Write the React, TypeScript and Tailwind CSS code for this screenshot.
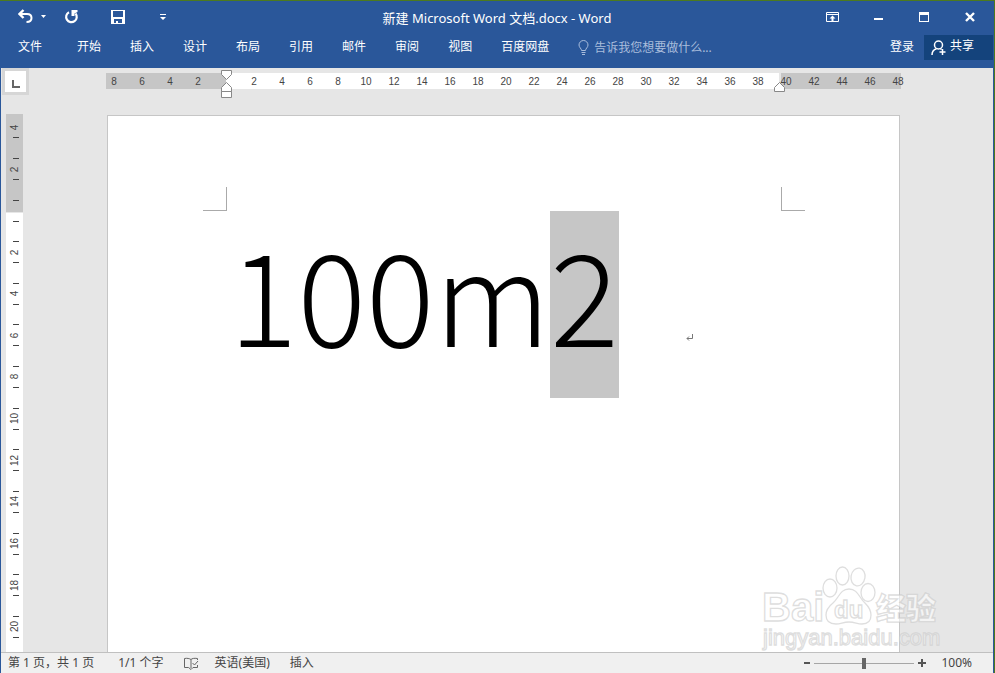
import { useState, type ReactNode } from "react";

const MENU_TABS = ["文件", "开始", "插入", "设计", "布局", "引用", "邮件", "审阅", "视图"];

const LEFT_MARGIN_MARKS = [8, 6, 4, 2];
const TEXT_MARKS = Array.from({ length: 19 }, (_, i) => (i + 1) * 2);
const RIGHT_MARGIN_MARKS = [40, 42, 44, 46, 48];
const VERTICAL_MARKS = Array.from({ length: 10 }, (_, i) => (i + 1) * 2);

function IconButton({
  label,
  className,
  children,
}: {
  label: string;
  className: string;
  children: ReactNode;
}) {
  return (
    <button
      type="button"
      aria-label={label}
      className={`flex h-5 items-center justify-center ${className}`}
    >
      {children}
    </button>
  );
}

function UndoIcon() {
  return (
    <svg width="15" height="15" viewBox="0 0 15 15" fill="none" className="-mt-1">
      <path d="M5.500 1 1.500 5 5.500 9" stroke="#fff" strokeWidth="2.400" />
      <path
        d="M2 5H9C11.800 5 13.500 6.500 13.500 9C13.500 11.500 11.500 13 8.500 13"
        stroke="#fff"
        strokeWidth="2"
      />
    </svg>
  );
}

function RedoIcon() {
  return (
    <svg width="15" height="15" viewBox="0 0 15 15" fill="none" className="-mt-1">
      <path
        d="M5 3.200A5.300 5.300 0 1 0 11.500 4.500"
        stroke="#fff"
        strokeWidth="2.200"
      />
      <path d="M7.500 1H13.500V3L10.500 4.500V7H7.500Z" fill="#fff" />
    </svg>
  );
}

function SaveIcon() {
  return (
    <svg width="14" height="14" viewBox="0 0 14 14" className="-mt-1">
      <path
        fillRule="evenodd"
        fill="#fff"
        d="M0 0H14V14H0ZM2 1V7H12V1ZM3 9V13H5V11H7V13H11V9Z"
      />
    </svg>
  );
}

function TitleBar() {
  return (
    <header className="grid h-[31px] grid-cols-[1fr_auto_1fr] items-center pt-1">
      <div className="flex items-center pl-[14px]">
        <IconButton label="撤消" className="w-5">
          <UndoIcon />
        </IconButton>
        <IconButton label="撤消选项" className="w-4">
          <svg width="5" height="3" viewBox="0 0 5 3" className="-mt-1">
            <path d="M0 0H5L2.500 3Z" fill="#fff" />
          </svg>
        </IconButton>
        <IconButton label="重复" className="ml-2 w-6">
          <RedoIcon />
        </IconButton>
        <IconButton label="保存" className="ml-[25px] w-5">
          <SaveIcon />
        </IconButton>
        <IconButton label="自定义快速访问工具栏" className="ml-[25px] w-5">
          <svg width="6" height="6" viewBox="0 0 6 6" className="-mt-1">
            <path d="M0 0H6V1H0ZM0 3H6L3 6Z" fill="#fff" />
          </svg>
        </IconButton>
      </div>
      <h1 className="pb-0.5 text-[13px] leading-5 whitespace-nowrap">
        新建 Microsoft Word 文档.docx - Word
      </h1>
      <div className="flex items-center justify-end gap-[26px] pr-[13px]">
        <IconButton label="功能区显示选项" className="w-5">
          <svg width="13" height="10" viewBox="0 0 13 10" className="-mt-1">
            <path d="M.5.5H12.500V9.500H.5ZM.5 2.500H12.500" fill="none" stroke="#fff" />
            <path d="M6.500 3.500 9.500 6.500H7.500V9H5.500V6.500H3.500Z" fill="#fff" />
          </svg>
        </IconButton>
        <IconButton label="最小化" className="w-5">
          <svg width="9" height="10" viewBox="0 0 9 10" className="-mt-1">
            <path d="M0 6H9V8H0Z" fill="#fff" />
          </svg>
        </IconButton>
        <IconButton label="最大化" className="w-5">
          <svg width="10" height="10" viewBox="0 0 10 10" className="-mt-1">
            <path fillRule="evenodd" d="M0 0H10V10H0ZM1 3V9H9V3Z" fill="#fff" />
          </svg>
        </IconButton>
        <IconButton label="关闭" className="w-5">
          <svg width="10" height="10" viewBox="0 0 10 10" className="-mt-1">
            <path d="M1 1 9 9M9 1 1 9" stroke="#fff" strokeWidth="2.400" />
          </svg>
        </IconButton>
      </div>
    </header>
  );
}

function MenuBar() {
  return (
    <nav className="flex h-9 items-start text-xs leading-6">
      <div className="flex gap-[29px] pt-[3px] pl-[17px]">
        {MENU_TABS.map((tab) => (
          <button key={tab} type="button" className="first:mr-[6px]">
            {tab}
          </button>
        ))}
        <button type="button">百度网盘</button>
      </div>
      <label className="flex min-w-0 flex-1 items-center gap-1 pt-1 pl-7 text-[#a9bddc]">
        <svg
          width="13"
          height="16"
          viewBox="0 0 13 16"
          fill="none"
          stroke="#a9bddc"
          className="shrink-0"
        >
          <path d="M4.500 10.500C4.500 8.500 2 7.500 2 5A4.500 4.500 0 0 1 11 5C11 7.500 8.500 8.500 8.500 10.500ZM4.500 12.500H8.500M5 14.500H8" />
        </svg>
        <input
          aria-label="告诉我您想要做什么"
          placeholder="告诉我您想要做什么..."
          className="h-6 w-full min-w-0 bg-transparent outline-none placeholder:text-[#a9bddc]"
        />
      </label>
      <button type="button" className="mr-[10px] pt-[3px]">
        登录
      </button>
      <button
        type="button"
        className="mt-[3px] flex h-[25px] w-[69px] items-center gap-1 bg-[#14437c] pl-[7px]"
      >
        <svg
          width="15"
          height="16"
          viewBox="0 0 15 16"
          fill="none"
          stroke="#fff"
          strokeWidth="1.500"
        >
          <circle cx="7.500" cy="5" r="4" />
          <path d="M1 15C1 11.500 3 9.500 5.500 8.800M9.500 8.800 10.500 9.500M11.500 9V15M8.500 12H14.500" />
        </svg>
        <span className="-mt-1">共享</span>
      </button>
    </nav>
  );
}

function HorizontalRuler() {
  return (
    <div className="flex h-9 items-start">
      <button
        type="button"
        aria-label="左对齐式制表符"
        className="mt-[3px] ml-1 flex h-[21px] w-[21px] shrink-0 items-center justify-center bg-white outline-3 outline-[#d6d6d6]"
      >
        <svg width="8" height="8" viewBox="0 0 8 8" className="mt-1">
          <path d="M1 0V7H8" fill="none" stroke="#666" strokeWidth="2" />
        </svg>
      </button>
      <div className="mt-[5px] ml-20 flex h-4 font-['Liberation_Sans',sans-serif] text-[10px] leading-[18px] text-[#444]">
        <div className="flex w-[120px] bg-[#c6c6c6]">
          {LEFT_MARGIN_MARKS.map((mark) => (
            <span key={mark} className="w-7 shrink-0 text-center first:-ml-[6px]">
              {mark}
            </span>
          ))}
        </div>
        <div className="relative flex w-[553px] bg-white pl-[14px]">
          <svg
            width="12"
            height="28"
            viewBox="0 0 12 28"
            className="absolute -top-[3px] -left-[5px]"
          >
            <path
              d="M.5.5H10.500V4.500L5.500 9.500.5 4.500ZM5.500 12.500 10.500 17.500V21.500H.5V17.500ZM.5 21.500H10.500V27.500H.5Z"
              fill="#fff"
              stroke="#888"
            />
          </svg>
          {TEXT_MARKS.map((mark) => (
            <span key={mark} className="w-7 shrink-0 text-center">
              {mark}
            </span>
          ))}
          <svg
            width="12"
            height="11"
            viewBox="0 0 12 11"
            className="absolute top-[9px] -right-[7px] z-10"
          >
            <path d="M5.500.5 10.500 5.500V9.500H.5V5.500Z" fill="#fff" stroke="#888" />
          </svg>
        </div>
        <div className="ml-0.5 flex w-[120px] bg-[#c6c6c6]">
          {RIGHT_MARGIN_MARKS.map((mark) => (
            <span key={mark} className="w-7 shrink-0 text-center first:-ml-[9px]">
              {mark}
            </span>
          ))}
        </div>
      </div>
    </div>
  );
}

function Tick() {
  return <i className="block h-px w-1.5 shrink-0 bg-[#444]" />;
}

function RulerNumber({ value, open = false }: { value: number; open?: boolean }) {
  return (
    <div className="flex flex-col items-end">
      {!open && <Tick />}
      <span className="flex h-5 w-2 items-center justify-center">
        <b className="-rotate-90 font-normal">{value}</b>
      </span>
      <Tick />
    </div>
  );
}

function VerticalRuler() {
  return (
    <div className="ml-[5px] flex w-[17px] shrink-0 flex-col pt-[10px] font-['Liberation_Sans',sans-serif] text-[10px] text-[#444]">
      <div className="flex h-[98px] flex-col items-end gap-5 bg-[#c6c6c6] pt-[3px] pr-1">
        <RulerNumber value={4} open />
        <RulerNumber value={2} />
        <Tick />
      </div>
      <div className="mt-px flex flex-1 flex-col items-end bg-white pt-2 pr-1">
        <Tick />
        <div className="mt-[19px] flex h-[397px] flex-col justify-between">
          {VERTICAL_MARKS.map((mark) => (
            <RulerNumber key={mark} value={mark} />
          ))}
        </div>
      </div>
    </div>
  );
}

function Page() {
  return (
    <article className="mt-[11px] ml-[84px] w-[793px] border border-b-0 border-[#c6c6c6] bg-white">
      <div className="mx-[94px] mt-[71px] flex h-6 justify-between">
        <i className="ml-px w-6 border-r border-b border-[#aaa]" />
        <i className="w-6 border-b border-l border-[#aaa]" />
      </div>
      <p className="ml-[121px] font-['Noto_Sans_CJK_SC',sans-serif] text-[128px] leading-[162px] font-light whitespace-nowrap text-black">
        100m
        <mark className="inline-block bg-[#c6c6c6] pb-[25px] text-black">2</mark>
        <svg
          width="7"
          height="8"
          viewBox="0 0 7 8"
          className="mb-[5px] ml-[67px] inline align-baseline"
        >
          <path d="M6.500 0V4.500H1M3 2.500 1 4.500 3 6.500" fill="none" stroke="#777" />
        </svg>
      </p>
    </article>
  );
}

function Watermark() {
  return (
    <svg
      width="182"
      height="88"
      viewBox="0 0 182 88"
      className="pointer-events-none absolute right-[51px] bottom-0"
      fill="#fff"
      fillOpacity="0.600"
      stroke="#c8c8c8"
      strokeOpacity="0.600"
      strokeWidth="1.300"
      fontFamily="'Liberation Sans', 'Noto Sans CJK SC', sans-serif"
    >
      <text x="2" y="57" fontSize="40" fontWeight="700">
        Bai
      </text>
      <ellipse cx="70" cy="24" rx="7" ry="9" />
      <ellipse cx="82.500" cy="12" rx="6.500" ry="9" />
      <ellipse cx="98" cy="13" rx="7" ry="9" transform="rotate(10 98 13)" />
      <ellipse cx="108" cy="28.500" rx="7" ry="9" />
      <path d="M89 25C80 25 79 34 73 39C68 43 66 46 66 51C66 57 70 60 76 60C81 60 83 58 89 58C95 58 97 60 102 60C108 60 111 57 111 51C111 46 109 43 105 39C99 34 98 25 89 25Z" />
      <text x="74" y="54" fontSize="24" fontWeight="700">
        du
      </text>
      <text x="116" y="55" fontSize="30" fontWeight="900">
        经验
      </text>
      <text x="3" y="81" fontSize="22">
        jingyan.baidu.com
      </text>
    </svg>
  );
}

function StatusBar() {
  const [zoom, setZoom] = useState(100);

  return (
    <footer className="flex h-[21px] items-center border-t border-[#c0c0c0] bg-[#f0f0f0] pr-[21px] pl-[7px] text-xs leading-4 whitespace-nowrap text-[#444]">
      <span>第 1 页，共 1 页</span>
      <span className="ml-6">1/1 个字</span>
      <button type="button" aria-label="校对" className="ml-5">
        <svg width="15" height="13" viewBox="0 0 15 13" fill="none" stroke="#666">
          <path d="M7 2.500C5.500 1.500 3 1 .5 1.500V10.500H4.500L7 12.500 9 10.500H13.500V8M7 2.500V11M7 2.500C8 1.500 10 1 13.500 1.500V3M8.500 6 10.500 8 14 4" />
        </svg>
      </button>
      <button type="button" className="ml-4">
        英语(美国)
      </button>
      <button type="button" className="ml-5">
        插入
      </button>
      <div className="ml-auto flex items-center">
        <button type="button" aria-label="缩小" onClick={() => setZoom(Math.max(10, zoom - 10))}>
          <svg width="6" height="8" viewBox="0 0 6 8">
            <path d="M0 3H6V5H0Z" fill="#555" />
          </svg>
        </button>
        <input
          type="range"
          aria-label="显示比例"
          min={10}
          max={190}
          value={zoom}
          onChange={(e) => setZoom(Number(e.target.value))}
          className="mx-1 h-3 w-[100px] appearance-none bg-transparent bg-[linear-gradient(#a6a6a6,#a6a6a6)] bg-[length:100%_1px] bg-center bg-no-repeat [&::-webkit-slider-thumb]:h-[11px] [&::-webkit-slider-thumb]:w-1 [&::-webkit-slider-thumb]:appearance-none [&::-webkit-slider-thumb]:bg-[#666]"
        />
        <button type="button" aria-label="放大" onClick={() => setZoom(Math.min(190, zoom + 10))}>
          <svg width="8" height="8" viewBox="0 0 8 8">
            <path d="M3 0H5V3H8V5H5V8H3V5H0V3H3Z" fill="#555" />
          </svg>
        </button>
        <span className="ml-[15px]">{zoom}%</span>
      </div>
    </footer>
  );
}

export default function App() {
  return (
    <div className="flex min-h-screen flex-col bg-[#4c7a1e] pt-px pr-px font-['Noto_Sans','Noto_Sans_CJK_SC',sans-serif]">
      <div className="flex flex-1 flex-col border-x border-[#2a579a] bg-[#e6e6e6]">
        <div className="bg-[#2a579a] text-white">
          <TitleBar />
          <MenuBar />
        </div>
        <HorizontalRuler />
        <main className="relative flex flex-1">
          <VerticalRuler />
          <Page />
          <Watermark />
        </main>
        <StatusBar />
      </div>
    </div>
  );
}
